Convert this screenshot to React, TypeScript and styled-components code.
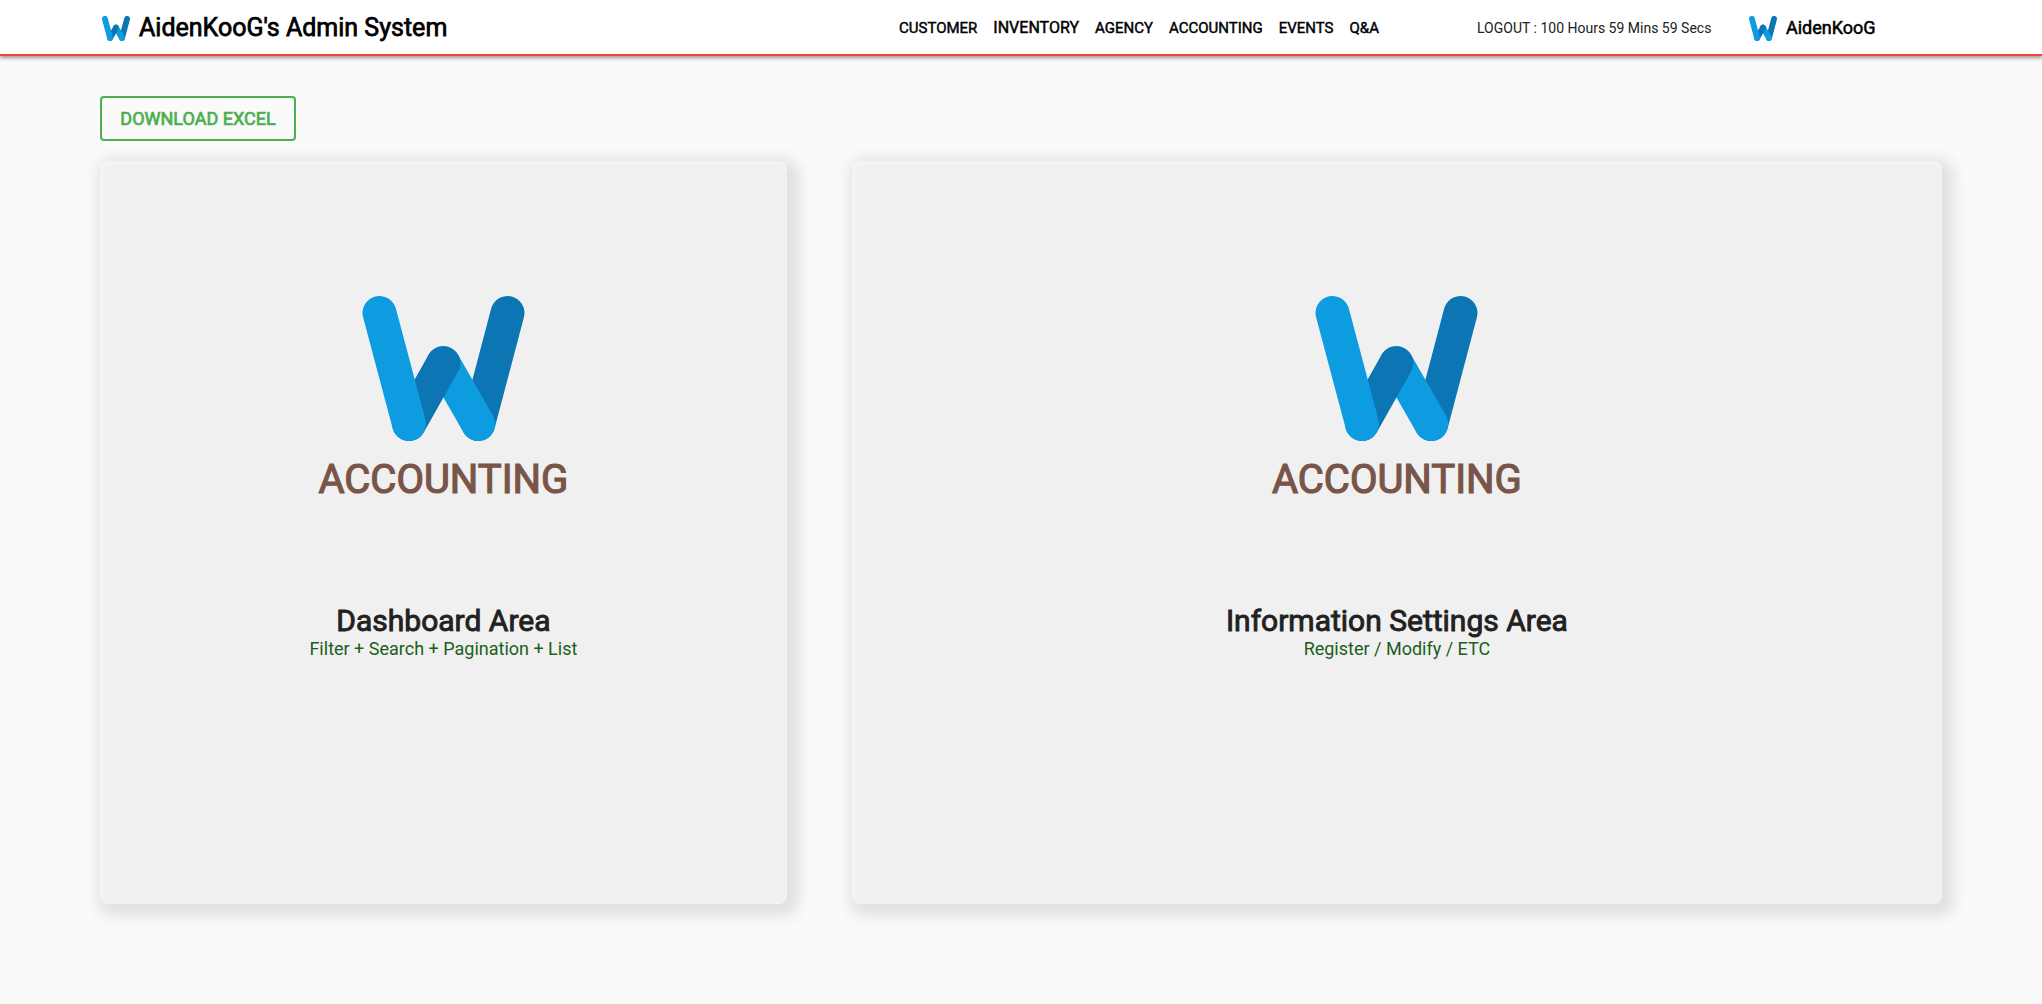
import React from "react";
import styled, { createGlobalStyle } from "styled-components";

const GlobalStyle = createGlobalStyle`
  * { box-sizing: border-box; }
  body {
    margin: 0;
    background: #fafafa;
    color: #212121;
    font-family: Roboto, "Liberation Sans", sans-serif;
  }
  h1, h2, h3, p { margin: 0; font-weight: 400; }
`;

const Header = styled.header`
  display: grid;
  grid-template-columns: 799fr 578fr 270fr 195fr;
  align-items: center;
  height: 56px;
  padding: 2px 100px 0;
  background: #fff;
  border-bottom: 2px solid #f44336;
  box-shadow: 0 2px 4px rgba(0, 0, 0, 0.4);
  color: #000;
`;

const Brand = styled.a<{ $size: number }>`
  display: flex;
  align-items: center;
  gap: 9px;
  padding-left: 2px;
  color: inherit;
  text-decoration: none;
  white-space: nowrap;
  font-size: ${(p) => p.$size}px;
  line-height: 32px;
  -webkit-text-stroke: 0.03em currentColor;
`;

const Nav = styled.nav`
  display: flex;
  align-items: center;
  gap: 16px;
`;

const NavLink = styled.a<{ $current?: boolean }>`
  color: inherit;
  text-decoration: none;
  font-size: ${(p) => (p.$current ? 16 : 15)}px;
  line-height: 24px;
  -webkit-text-stroke: 0.03em currentColor;
`;

const Logout = styled.button`
  justify-self: start;
  padding: 0;
  border: 0;
  background: none;
  color: #212121;
  font: 400 14px/24px Roboto, "Liberation Sans", sans-serif;
  white-space: nowrap;
`;

const Main = styled.main`
  padding: 40px 100px;
`;

const DownloadButton = styled.button`
  display: block;
  height: 45px;
  min-width: 196px;
  padding: 0 18px;
  border: 2px solid #4caf50;
  border-radius: 4px;
  background: transparent;
  color: #4caf50;
  font: 400 18px/24px Roboto, "Liberation Sans", sans-serif;
  -webkit-text-stroke: 0.04em currentColor;
`;

const Panels = styled.div`
  display: grid;
  grid-template-columns: 63fr 100fr;
  gap: 65px;
  margin-top: 20px;
`;

const Panel = styled.section`
  display: flex;
  flex-direction: column;
  align-items: center;
  min-height: 74vh;
  padding-top: 135px;
  border-radius: 8px;
  background: #f0f0f0;
  box-shadow: 5px 5px 14px 7px #e0e0e0, inset 4px 4px 8px #f4f4f4;
  text-align: center;
`;

const Section = styled.h2`
  margin-top: 15px;
  color: #795548;
  font-size: 40px;
  line-height: 48px;
  -webkit-text-stroke: 0.03em currentColor;
`;

const Area = styled.h3`
  margin-top: 101px;
  font-size: 30px;
  line-height: 32px;
  -webkit-text-stroke: 0.03em currentColor;
`;

const Detail = styled.p`
  color: #1b5e20;
  font-size: 18px;
  line-height: 24px;
`;

function Logo({ width, height }: { width: number; height: number }) {
  return (
    <svg width={width} height={height} viewBox="187 47 487 436" fill="none" strokeWidth="102" strokeLinecap="round" aria-hidden="true">
      <path d="M623 98 535 432" stroke="#0b76b3" />
      <path d="M430 249 535 432" stroke="#0c9cdf" />
      <path d="M430 249 327 432" stroke="#0b76b3" />
      <path d="M238 98 327 432" stroke="#0c9cdf" />
    </svg>
  );
}

const links = ["CUSTOMER", "INVENTORY", "AGENCY", "ACCOUNTING", "EVENTS", "Q&A"];

const panels = [
  { area: "Dashboard Area", detail: "Filter + Search + Pagination + List" },
  { area: "Information Settings Area", detail: "Register / Modify / ETC" },
];

export default function App() {
  return (
    <>
      <GlobalStyle />
      <Header>
        <Brand href="#" $size={25}>
          <Logo width={28} height={25} />
          AidenKooG's Admin System
        </Brand>
        <Nav>
          {links.map((label) => (
            <NavLink key={label} href="#" $current={label === "INVENTORY"}>
              {label}
            </NavLink>
          ))}
        </Nav>
        <Logout type="button">LOGOUT : 100 Hours 59 Mins 59 Secs</Logout>
        <Brand href="#" $size={18}>
          <Logo width={28} height={25} />
          AidenKooG
        </Brand>
      </Header>
      <Main>
        <DownloadButton type="button">DOWNLOAD EXCEL</DownloadButton>
        <Panels>
          {panels.map(({ area, detail }) => (
            <Panel key={area}>
              <Logo width={163} height={145} />
              <Section>ACCOUNTING</Section>
              <Area>{area}</Area>
              <Detail>{detail}</Detail>
            </Panel>
          ))}
        </Panels>
      </Main>
    </>
  );
}
